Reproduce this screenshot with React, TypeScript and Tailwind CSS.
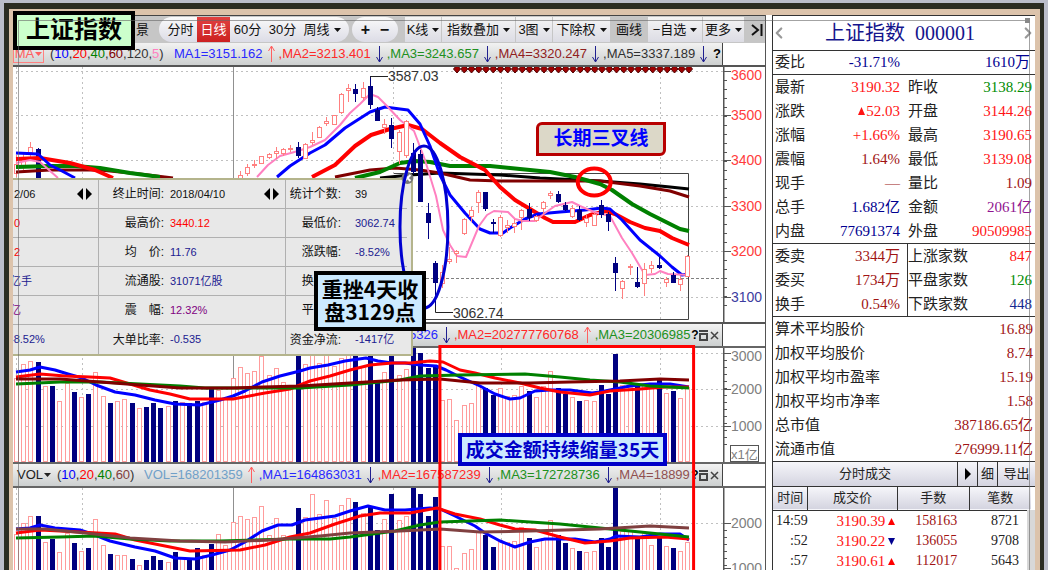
import React from "react";
import { ChevronLeft, ChevronRight } from "lucide-react";

const BLUE = "#0000ff";
const NAVY = "#000080";
const RED = "#ff0000";
const GREEN = "#008000";
const MAROON = "#800000";
const PINK = "#ff80c0";
const UP = "#ff8080";

type Candle = [up: number, high: number, top: number, bottom: number, low: number];

const STEP = 7.22;
const barX = (i: number) => 17 + i * STEP;

// first bars of the window, the ones behind the stats panel are skipped
const leftCandles: Candle[] = [
  [1, 155, 164, 174, 177], [1, 153, 158, 168, 170], [1, 142, 147, 153, 158], [0, 148, 149, 178, 178],
];

// from bar 31 on
const candles: Candle[] = [
  [1, 171, 175, 180, 182], [1, 164, 167, 174, 176], [1, 160, 164, 166, 168], [1, 156, 156, 164, 164],
  [1, 153, 154, 158, 159], [1, 147, 151, 154, 159], [1, 148, 149, 154, 156], [1, 145, 148, 150, 152],
  [0, 142, 147, 156, 158], [1, 143, 144, 159, 159], [1, 132, 140, 143, 145], [1, 126, 127, 138, 138],
  [1, 117, 121, 124, 126], [1, 115, 115, 125, 125], [1, 93, 94, 113, 114], [1, 84, 88, 91, 102],
  [0, 84, 89, 94, 102], [1, 82, 88, 98, 100], [0, 76, 86, 105, 109], [0, 107, 110, 121, 121],
  [1, 119, 124, 128, 134], [0, 118, 125, 139, 148], [1, 130, 132, 152, 164], [1, 120, 121, 156, 158],
  [0, 143, 153, 172, 174], [0, 150, 154, 202, 202], [0, 203, 213, 223, 239], [0, 261, 263, 283, 312],
  [1, 265, 272, 284, 288], [1, 247, 259, 262, 264], [1, 250, 251, 254, 263], [1, 218, 219, 234, 235],
  [1, 207, 210, 217, 222], [1, 190, 192, 203, 213], [0, 192, 192, 209, 211], [0, 219, 222, 224, 233],
  [1, 215, 217, 236, 237], [1, 220, 225, 228, 233], [1, 219, 223, 227, 233], [1, 209, 210, 218, 230],
  [0, 203, 209, 218, 221], [1, 215, 216, 221, 222], [1, 201, 202, 209, 214], [1, 191, 193, 196, 199],
  [0, 191, 194, 202, 203], [0, 202, 205, 210, 211], [1, 205, 208, 217, 218], [0, 206, 210, 220, 221],
  [1, 215, 218, 223, 227], [1, 212, 214, 226, 226], [0, 200, 205, 215, 218], [0, 212, 214, 222, 231],
  [0, 257, 263, 273, 291], [1, 280, 281, 289, 299], [1, 264, 266, 267, 275], [0, 267, 282, 287, 288],
  [1, 263, 269, 284, 296], [1, 261, 265, 269, 273], [0, 257, 265, 268, 269], [1, 277, 279, 283, 287],
  [0, 272, 275, 283, 283], [1, 276, 279, 285, 291], [1, 255, 256, 277, 277],
];

// [up, turnover top, volume top]
const bars: [number, number, number][] = [
  [1, 378, 534], [1, 364, 523], [1, 361, 516], [0, 362, 516], [1, 386, 542], [0, 386, 539], [1, 401, 552],
  [1, 383, 533], [0, 392, 543], [1, 397, 551], [0, 394, 548], [1, 372, 519], [1, 396, 545], [0, 403, 554],
  [1, 401, 555], [1, 399, 555], [0, 403, 559], [1, 408, 565], [0, 407, 560], [0, 403, 556], [0, 408, 560],
  [1, 406, 562], [0, 401, 552], [1, 402, 558], [0, 403, 558], [0, 401, 548], [1, 402, 555], [0, 389, 544],
  [1, 390, 534], [1, 398, 545], [1, 378, 522], [1, 367, 516], [1, 373, 519], [1, 371, 517], [1, 356, 506],
  [1, 375, 535], [1, 368, 518], [1, 382, 535], [1, 385, 537], [0, 350, 508], [1, 364, 517], [1, 352, 494],
  [1, 363, 514], [1, 350, 500], [1, 366, 518], [1, 358, 505], [1, 352, 498], [0, 352, 502], [1, 366, 513],
  [0, 356, 506], [0, 380, 530], [1, 372, 519], [0, 354, 494], [1, 375, 520], [1, 369, 516], [0, 348, 486],
  [0, 353, 494], [0, 368, 516], [0, 365, 497], [1, 400, 546], [1, 399, 546], [1, 420, 568], [1, 405, 553],
  [1, 403, 549], [1, 385, 531], [0, 388, 535], [0, 395, 547], [1, 388, 540], [1, 396, 542], [1, 395, 541],
  [1, 386, 527], [0, 391, 538], [1, 397, 547], [1, 386, 538], [1, 371, 520], [0, 388, 535], [0, 394, 543],
  [1, 397, 548], [0, 401, 551], [1, 400, 552], [1, 401, 551], [0, 385, 538], [0, 394, 547], [0, 354, 488],
  [1, 385, 531], [1, 387, 530], [0, 385, 538], [1, 385, 533], [1, 388, 545], [0, 380, 538], [1, 393, 546],
  [0, 391, 548], [1, 398, 551], [1, 387, 542],
];

interface Line {
  color: string;
  width: number;
  points: string;
}

const priceLines: Line[] = [
  { color: "#000000", width: 3, points: "380,178 410,175 440,173 500,175 540,178 600,181 640,184 670,187 689,189" },
  { color: MAROON, width: 3, points: "16,172 50,170 100,170 140,174 173,178" },
  { color: MAROON, width: 3, points: "335,177 370,170 395,168 420,170 440,173 470,180 500,181 600,181 640,186 670,191 689,197" },
  { color: GREEN, width: 4, points: "16,167 50,166 75,166 100,168 130,173 160,177" },
  { color: GREEN, width: 4, points: "355,178 380,172 400,163 415,161 430,162 450,166 490,166 510,168 550,172 575,177 600,184 612,190 632,204 650,214 668,223 680,229 689,231" },
  { color: RED, width: 4, points: "16,159 40,158 70,163 95,170 113,178" },
  { color: RED, width: 4, points: "312,177 335,165 355,146 371,135 390,129 408,125 422,129 440,143 460,157 485,170 500,187 515,200 530,209 545,218 553,222 575,222 590,215 606,211 615,214 630,222 645,228 660,231 672,238 689,245" },
  { color: BLUE, width: 3, points: "16,153 38,154 50,165 62,171 75,178" },
  { color: BLUE, width: 3, points: "277,177 290,166 310,153 325,145 345,128 370,112 385,107 400,109 408,110 420,124 430,146 440,175 450,195 465,213 480,229 490,233 503,233 510,228 525,219 538,214 560,212 585,210 602,208 610,209 622,220 640,240 660,256 672,267 682,275 689,274" },
  { color: PINK, width: 2, points: "16,163 30,160 40,162 58,178" },
  { color: PINK, width: 2, points: "257,177 268,165 280,156 298,151 310,147 325,140 340,125 350,113 360,104 370,94 378,97 386,105 400,120 414,131 425,160 436,196 443,230 450,245 457,256 466,257 479,226 487,215 494,211 508,212 515,219 523,221 535,221 545,213 555,206 572,202 580,206 594,212 602,214 610,216 622,238 632,253 645,275 655,274 660,271 668,274 689,275" },
];

const turnoverLines: Line[] = [
  { color: BLUE, width: 3, points: "16,372 30,370 40,367 55,370 68,374 82,378 96,385 115,392 135,395 155,400 175,404 200,405 220,400 233,396 245,391 262,382 280,376 300,371 310,368 328,365 345,361 366,358 378,361 392,363 405,363 420,365 436,366 446,370 460,377 480,386 495,394 510,399 520,398 535,391 550,390 570,390 592,393 600,392 615,389 630,386 650,384 670,384 689,387" },
  { color: RED, width: 3, points: "16,377 40,374 65,376 90,377 110,378 130,384 150,390 170,394 190,399 233,399 265,393 290,389 310,381 330,376 350,370 370,365 392,363 410,363 430,361 443,362 460,370 475,373 495,378 520,383 540,388 560,392 590,395 610,391 640,389 665,387 689,387" },
  { color: GREEN, width: 3, points: "16,384 60,382 100,382 140,384 180,386 205,388 300,388 350,385 400,380 420,376 460,375 525,374 560,377 590,380 620,382 650,386 689,388" },
  { color: MAROON, width: 3, points: "16,379 60,379 100,382 140,385 180,388 233,388 300,386 350,383 400,380 440,379 460,381 480,383 530,383 570,382 620,381 660,379 689,380" },
];

const volumeLines: Line[] = [
  { color: BLUE, width: 3, points: "16,529 30,528 40,525 55,528 80,530 95,535 110,541 135,547 155,551 175,558 195,559 212,555 230,550 245,542 262,531 278,525 292,525 305,520 335,516 350,511 368,506 385,510 405,510 430,508 440,509 455,516 475,526 485,533 500,541 515,547 530,542 545,539 575,539 595,542 610,539 616,536 640,537 660,534 680,534 689,540" },
  { color: RED, width: 3, points: "16,533 40,530 80,532 115,534 135,540 160,545 190,551 240,550 265,545 290,537 310,533 335,524 360,516 380,513 410,513 437,508 455,514 480,519 500,525 515,529 535,530 560,537 585,543 610,541 630,538 665,537 689,539" },
  { color: GREEN, width: 3, points: "16,538 60,537 95,536 130,539 170,541 220,541 290,539 330,539 350,537 395,531 420,525 440,522 500,520 560,524 600,528 640,532 670,535 689,537" },
  { color: "#804040", width: 3, points: "16,529 45,529 95,534 130,538 180,541 225,542 270,540 320,536 350,533 400,531 440,529 480,532 530,531 600,529 650,526 689,528" },
];

function Grid({ top, bottom, rows }: { top: number; bottom: number; rows: number[] }) {
  return (
    <g shapeRendering="crispEdges">
      <g stroke="#c0c0c0" strokeDasharray="2 3">
        {rows.map((y) => <path key={y} d={`M16 ${y}.5H723`} />)}
        {[16, 82, 393, 501, 660].map((x) => <path key={x} d={`M${x}.5 ${top}V${bottom}`} />)}
      </g>
      <path d={`M233.5 ${top}V${bottom}`} stroke="#909090" />
    </g>
  );
}

function Lines({ lines }: { lines: Line[] }) {
  return (
    <g fill="none" strokeLinejoin="round">
      {lines.map((l) => (
        <polyline key={l.color + l.points.slice(0, 7)} points={l.points} stroke={l.color} strokeWidth={l.width} />
      ))}
    </g>
  );
}

function Candles({ data, start }: { data: Candle[]; start: number }) {
  return (
    <g>
      {data.map(([up, high, top, bottom, low], i) => {
        const x = Math.round(barX(start + i)) - 1;
        const color = up ? UP : NAVY;
        return (
          <g key={i} stroke={color}>
            <path d={`M${x}.5 ${high}V${top}M${x}.5 ${bottom}V${low}`} />
            <rect x={x - 1.5} y={top + 0.5} width={4} height={Math.max(bottom - top - 1, 1)} fill={up ? "#fff" : NAVY} />
          </g>
        );
      })}
    </g>
  );
}

function Bars({ pick, base }: { pick: 1 | 2; base: number }) {
  return (
    <g>
      {bars.map((b, i) => {
        const x = Math.round(barX(i)) - 3;
        return b[0] ? (
          <rect key={i} x={x + 0.5} y={b[pick] + 0.5} width={4} height={base - b[pick] - 1} fill="#fff" stroke="#ff9c9c" />
        ) : (
          <rect key={i} x={x} y={b[pick]} width={5} height={base - b[pick]} fill={NAVY} />
        );
      })}
    </g>
  );
}

function Axis({ top, height, labels, unit }: { top: number; height: number; labels: [string, number, string][]; unit?: string }) {
  const gap = labels.length > 3 ? 9 : 7;
  const ticks = Array.from({ length: Math.floor((height - 10) / gap) }, (_, i) => labels[0][1] + i * gap);
  return (
    <svg className="w-[42px] shrink-0" height={height} viewBox={`723 ${top} 42 ${height}`}>
      <g stroke="#555">
        <path d={`M723.5 ${top}V${top + height}`} strokeWidth="2" />
        {ticks.map((y) => <path key={y} d={`M723 ${y}.5H727`} />)}
        {labels.map(([t, y]) => <path key={t} d={`M723 ${y}.5H731`} />)}
      </g>
      {/* the first label is pushed down so it stays inside the pane */}
      {labels.map(([t, y, color]) => (
        <text key={t} x="731" y={Math.max(y + 5, top + 13)} fontSize="14" fill={color}>{t}</text>
      ))}
      {unit && (
        <g>
          <rect x="730.5" y="445.5" width="28" height="16" fill="#fff" stroke="#555" />
          <text x="731" y="459" fontSize="13" fill="#808080">{unit}</text>
        </g>
      )}
    </svg>
  );
}

function Arrow({ up }: { up?: boolean }) {
  return (
    <svg className="w-4 h-[18px] shrink-0" viewBox="0 0 16 18" fill="none" stroke={up ? "#ff6060" : "#202090"}>
      {up ? <path d="M8.5 17V1M5.5 6L8.5 1L11.5 6" /> : <path d="M8.5 1V17M5.5 12L8.5 17L11.5 12" />}
    </svg>
  );
}

function Caret() {
  return <svg className="w-[7px] h-1 shrink-0" viewBox="0 0 7 4"><path d="M0 0H7L3.5 4Z" fill="currentColor" /></svg>;
}

function Ma({ text, className, up, last }: { text: string; className: string; up?: boolean; last?: boolean }) {
  return (
    <span className={`flex items-center ${className}`}>
      {text}
      {!last && <Arrow up={up} />}
    </span>
  );
}

function PaneHeader({ children, tools }: { children: React.ReactNode; tools?: boolean }) {
  return (
    <div className="flex h-[22px]">
      <div className="flex-1 min-w-0 flex items-center bg-linear-to-b from-[#f2f2f2] to-[#cdd0d0] border-r border-[#444] text-[13px] whitespace-nowrap">
        <div className="flex-1 min-w-0 flex items-center overflow-hidden">{children}</div>
        {tools ? (
          <div className="flex items-center shrink-0 text-[#444]">
            <button aria-label="说明" className="w-2 text-[12px] font-bold text-black">?</button>
            <button aria-label="最大化" className="w-[11px]">
              <svg className="w-[9px] h-[11px]" viewBox="0 0 9 11" fill="none" stroke="currentColor"><path d="M0 1H9" strokeWidth="2" /><rect x="1" y="4" width="7" height="6" strokeWidth="2" /></svg>
            </button>
            <button aria-label="关闭" className="w-3">
              <svg className="w-[9px] h-[9px]" viewBox="0 0 9 9" stroke="currentColor" strokeWidth="1.5"><path d="M1 1L8 8M8 1L1 8" /></svg>
            </button>
          </div>
        ) : (
          <button aria-label="说明" className="w-[10px] shrink-0 text-[13px] font-bold text-black">?</button>
        )}
      </div>
      <div className="w-[42px] bg-white" />
    </div>
  );
}

const periods = ["60分", "30分"];

const menus = [
  { text: "K线", caret: true, cls: "w-[36px] bg-linear-to-b from-[#f4f4f4] to-[#dcdce4]" },
  { text: "指数叠加", caret: true, cls: "w-[73px] bg-linear-to-b from-[#f4f4f4] to-[#dcdce4]" },
  { text: "3图", caret: true, cls: "w-[36px] bg-linear-to-b from-[#f4f4f4] to-[#dcdce4]" },
  { text: "下除权", caret: true, cls: "w-[57px] bg-linear-to-b from-[#f4f4f4] to-[#dcdce4]" },
  { text: "画线", caret: false, cls: "w-[36px] bg-[#c6c6c6]" },
  { text: "−自选", caret: true, cls: "w-[54px] bg-linear-to-b from-[#f4f4f4] to-[#dcdce4]" },
  { text: "更多", caret: true, cls: "w-[41px] bg-linear-to-b from-[#f4f4f4] to-[#dcdce4]" },
];

function Toolbar() {
  return (
    <div className="flex items-center h-7 pl-[123px] bg-[#c6c6c6] border-t border-[#444] text-[13px] text-[#111] whitespace-nowrap">
      <span className="w-[23px]">景</span>
      <div className="flex items-center h-[25px] pl-[5px] pr-[5px] rounded-full bg-linear-to-b from-[#fafafa] to-[#dcdce6]">
        <button className="w-[33px]">分时</button>
        <button className="w-[33px] h-[25px] bg-linear-to-b from-[#e04040] to-[#cc2020] text-white">日线</button>
        {periods.map((p) => <button key={p} className="w-[35px]">{p}</button>)}
        <button className="flex items-center justify-center gap-1 w-[44px]">周线<Caret /></button>
      </div>
      <div className="flex items-center justify-around h-[25px] w-[46px] mx-[3px] px-1 rounded-full bg-linear-to-b from-[#fafafa] to-[#dcdce6] text-base font-bold">
        <button>+</button>
        <button>−</button>
      </div>
      <div className="flex items-center gap-px ml-1">
        {menus.map((m) => (
          <button key={m.text} className={`flex items-center justify-center gap-1 h-[25px] ${m.cls}`}>
            {m.text}
            {m.caret && <Caret />}
          </button>
        ))}
      </div>
      <button aria-label="收起" className="ml-auto mr-[2px]">
        <svg className="w-3 h-[14px]" viewBox="0 0 12 14" fill="none" stroke="#111" strokeWidth="2"><path d="M1 2L7 7L1 12M10.5 1V13" /></svg>
      </button>
    </div>
  );
}

function Switcher() {
  return (
    <span className="flex gap-[3px] ml-auto">
      <button aria-label="向前"><svg className="w-[6px] h-3" viewBox="0 0 6 12"><path d="M6 0V12L0 6Z" /></svg></button>
      <button aria-label="向后"><svg className="w-[6px] h-3" viewBox="0 0 6 12"><path d="M0 0V12L6 6Z" /></svg></button>
    </span>
  );
}

const stats = [
  { a: "2/06", aCls: "", b: "终止时间", bv: "2018/04/10", bCls: "", c: "统计个数", cv: "39", cCls: "" },
  { a: "0", aCls: "text-[#ff0000]", b: "最高价", bv: "3440.12", bCls: "text-[#ff0000]", c: "最低价", cv: "3062.74", cCls: "text-[#202090]" },
  { a: "2", aCls: "text-[#ff0000]", b: "均　价", bv: "11.76", bCls: "text-[#202090]", c: "涨跌幅", cv: "-8.52%", cCls: "text-[#202090]" },
  { a: "亿手", aCls: "-ml-1 text-[#202090]", b: "流通股", bv: "31071亿股", bCls: "text-[#202090]", c: "换手率", cv: "", cCls: "" },
  { a: "亿", aCls: "-ml-1 text-[#800080]", b: "震　幅", bv: "12.32%", bCls: "text-[#800080]", c: "平衡点", cv: "", cCls: "" },
  { a: "-8.52%", aCls: "-ml-1 text-[#202090]", b: "大单比率", bv: "-0.535", bCls: "text-[#202090]", c: "资金净流", cv: "-1417亿", cCls: "text-[#202090]" },
];

function StatsPanel() {
  return (
    <div className="absolute left-0 top-[163px] w-[400px] bg-[#e8e8e8] border-t-2 border-r-2 border-b-2 border-[#b4b48c] pr-1 text-[11px] text-[#111] whitespace-nowrap overflow-hidden">
      {stats.map((s, i) => (
        <div key={s.b} className={`flex h-[29px] ${i < 5 ? "border-b border-[#b0b0b0]" : ""}`}>
          <div className="flex items-center w-[86px] pl-px pr-[6px] border-r border-[#b0b0b0]">
            <span className={s.aCls}>{s.a}</span>
            {i === 0 && <Switcher />}
          </div>
          <div className="flex items-center w-[187px] pr-[6px] border-r border-[#b0b0b0]">
            <span className="w-[65px] text-right text-[12px]">{s.b}:</span>
            <span className={`ml-[6px] ${s.bCls}`}>{s.bv}</span>
            {i === 0 && <Switcher />}
          </div>
          <div className="flex items-center flex-1">
            <span className="w-[55px] text-right text-[12px]">{s.c}:</span>
            <span className={`ml-[14px] ${s.cCls}`}>{s.cv}</span>
          </div>
        </div>
      ))}
    </div>
  );
}

function ChartPanel() {
  return (
    <main className="relative flex-1 min-w-0 border-r border-[#555] bg-white">
      <Toolbar />
      <PaneHeader>
        <button className="flex items-center gap-px w-[31px] h-[17px] mr-[6px] border border-[#ff8080] justify-center text-[#ff6060]">MA<Caret /></button>
        <span className="w-[124px] text-[#333]">
          (<b className="font-normal text-[#0000ff]">10</b>,<b className="font-normal text-[#ff0000]">20</b>,
          <b className="font-normal text-[#008000]">40</b>,<b className="font-normal text-[#800000]">60</b>,120,
          <b className="font-normal text-[#ff80c0]">5</b>)
        </span>
        <Ma text="MA1=3151.162" className="text-[#2828ff]" up />
        <Ma text=",MA2=3213.401" className="text-[#ff2828]" />
        <Ma text=",MA3=3243.657" className="text-[#209020]" />
        <Ma text=",MA4=3320.247" className="text-[#902020]" />
        <Ma text=",MA5=3337.189" className="text-[#303030]" />
      </PaneHeader>

      {/* ── 日K线 ── */}
      <div className="flex h-[259px] border-t-2 border-b-2 border-[#555]">
        <svg className="flex-1 min-w-0" height={255} viewBox="13 67 710 255" preserveAspectRatio="none">
          <Grid top={67} bottom={322} rows={[71, 115, 160, 206, 251, 297]} />
          <path d="M16 278.5H723" stroke="#808080" strokeDasharray="3 2" />
          <path d="M394 173.5H688.5V319.5H394" fill="none" stroke="#444" />
          <Candles data={leftCandles} start={0} />
          <Lines lines={priceLines} />
          <Candles data={candles} start={31} />
          <g fill="#a00000" stroke="#500000">
            {Array.from({ length: 33 }, (_, i) => {
              const x = 457 + i * 7.25;
              return <path key={i} d={`M${x} 65L${x + 3.5} 69L${x} 73L${x - 3.5} 69Z`} />;
            })}
          </g>
          <path d="M370.5 78V76.5H388M435.5 306V312.5H453" fill="none" stroke="#222" />
          <text x="388" y="81" fontSize="14" fill="#333">3587.03</text>
          <text x="453" y="318" fontSize="14" fill="#333">3062.74</text>
        </svg>
        <Axis
          top={67}
          height={255}
          labels={[["3600", 71, "#ff3c3c"], ["3500", 115, "#ff3c3c"], ["3400", 160, "#ff3c3c"], ["3300", 206, "#ff3c3c"], ["3200", 251, "#ff3c3c"], ["3100", 297, "#3c3ca0"]]}
        />
      </div>

      <PaneHeader tools>
        <span className="w-[396px] shrink-0" />
        <Ma text="5326" className="text-[#2828ff]" />
        <Ma text=",MA2=202777760768" className="text-[#ff2828]" up />
        <Ma text=",MA3=20306985" className="text-[#209020]" last />
      </PaneHeader>

      {/* ── 成交额 ── */}
      <div className="flex h-[118px] border-t-2 border-b-2 border-[#666]">
        <svg className="flex-1 min-w-0" height={114} viewBox="13 348 710 114" preserveAspectRatio="none">
          <Grid top={348} bottom={462} rows={[353, 389, 426]} />
          <Bars pick={1} base={462} />
          <Lines lines={turnoverLines} />
        </svg>
        <Axis top={348} height={114} labels={[["3000", 353, "#808080"], ["2000", 389, "#808080"], ["1000", 426, "#808080"]]} unit="x1亿" />
      </div>

      <PaneHeader tools>
        <button className="flex items-center gap-px w-[40px] shrink-0 ml-1 text-[#222]">VOL<Caret /></button>
        <span className="w-[87px] shrink-0 text-[#333]">
          (<b className="font-normal text-[#0000ff]">10</b>,<b className="font-normal text-[#ff0000]">20</b>,
          <b className="font-normal text-[#008000]">40</b>,<b className="font-normal text-[#804040]">60</b>)
        </span>
        <Ma text="VOL=168201359" className="text-[#70a0c8]" up />
        <Ma text=",MA1=164863031" className="text-[#2828ff]" />
        <Ma text=",MA2=167587239" className="text-[#ff2828]" />
        <Ma text=",MA3=172728736" className="text-[#209020]" />
        <Ma text=",MA4=18899" className="text-[#905050]" last />
      </PaneHeader>

      {/* ── 成交量 ── */}
      <div className="flex h-[84px] border-t-2 border-[#666] overflow-hidden">
        <svg className="flex-1 min-w-0" height={84} viewBox="13 488 710 84" preserveAspectRatio="none">
          <Grid top={488} bottom={572} rows={[523, 570]} />
          <Bars pick={2} base={612} />
          <Lines lines={volumeLines} />
        </svg>
        <Axis top={488} height={84} labels={[["2000", 523, "#808080"], ["1000", 568, "#808080"]]} />
      </div>

      <StatsPanel />

      {/* ── Annotations ── */}
      <svg className="absolute inset-0 w-full h-[555px] pointer-events-none" viewBox="13 15 753 555" preserveAspectRatio="none" fill="none">
        <circle cx="408" cy="178" r="6" fill="#777" />
        <path d="M405 175L411 181M411 175L405 181" stroke="#fff" strokeWidth="2" />
        <ellipse cx="424.5" cy="227" rx="24" ry="81" stroke="#0000d0" strokeWidth="3" />
        <ellipse cx="595" cy="182" rx="16.5" ry="13.5" stroke={RED} strokeWidth="4" />
        <path d="M440.5 572V346.5H694.5V572" stroke={RED} strokeWidth="3" />
      </svg>
      <h1 className="absolute left-0 -top-1 w-[122px] h-[39px] border-4 border-black bg-[#ccffcc] text-[24px] leading-[30px] font-bold text-black text-center whitespace-nowrap">上证指数</h1>
      <div className="absolute left-[523px] top-[107px] w-[130px] h-[34px] border-3 border-[#b80000] rounded-tl-md rounded-br-md bg-[#dcd8c8] text-[19px] leading-[28px] font-bold text-[#0000ff] text-center">长期三叉线</div>
      <div className="absolute left-[301px] top-[256px] w-[112px] h-[60px] border-4 border-black bg-[#cceaff] text-[21px] leading-[23px] pt-[2px] font-bold text-black text-center [font-family:'Noto_Sans_CJK_SC',sans-serif] whitespace-nowrap">
        重挫4天收<br />盘3129点
      </div>
      <div className="absolute left-[445px] top-[418px] w-[209px] h-[33px] border-4 border-[#0000c8] bg-[#cceaff] text-[19px] leading-[24px] font-bold text-[#0000c8] text-center [font-family:'Noto_Sans_CJK_SC',sans-serif] whitespace-nowrap">成交金额持续缩量35天</div>
    </main>
  );
}

const quotes = [
  ["最新", "3190.32", "text-[#ff1414]", "昨收", "3138.29", "text-[#008c00]"],
  ["涨跌", "▲52.03", "text-[#ff1414]", "开盘", "3144.26", "text-[#ff1414]"],
  ["涨幅", "+1.66%", "text-[#ff1414]", "最高", "3190.65", "text-[#ff1414]"],
  ["震幅", "1.64%", "text-[#a01414]", "最低", "3139.08", "text-[#ff1414]"],
  ["现手", "—", "text-[#a01414]", "量比", "1.09", "text-[#a01414]"],
  ["总手", "1.682亿", "text-[#000090]", "金额", "2061亿", "text-[#901490]"],
  ["内盘", "77691374", "text-[#000090]", "外盘", "90509985", "text-[#ff1414]"],
];

const breadth = [
  ["委卖", "3344万", "text-[#a01414]", "上涨家数", "847", "text-[#ff1414]"],
  ["委买", "1734万", "text-[#a01414]", "平盘家数", "126", "text-[#008c00]"],
  ["换手", "0.54%", "text-[#a01414]", "下跌家数", "448", "text-[#142890]"],
];

const averages = [
  ["算术平均股价", "16.89"],
  ["加权平均股价", "8.74"],
  ["加权平均市盈率", "15.19"],
  ["加权平均市净率", "1.58"],
  ["总市值", "387186.65亿"],
  ["流通市值", "276999.11亿"],
];

const ticks = [
  { time: "14:59", price: "3190.39", up: true, lots: "158163", deals: "8721" },
  { time: ":52", price: "3190.22", up: false, lots: "136055", deals: "9708" },
  { time: ":57", price: "3190.61", up: true, lots: "112017", deals: "5643" },
];

function QuoteRows({ rows, divided }: { rows: string[][]; divided?: boolean }) {
  return (
    <dl className="border-b border-[#333]">
      {rows.map((r) => (
        <div key={r[0]} className="flex items-center h-6 pl-[2px] pr-[3px]">
          <dt>{r[0]}</dt>
          <dd className={`w-[95px] text-right ${r[2]}`}>
            {r[1].startsWith("▲") ? (
              <>
                <svg className="inline w-[7px] h-2 mr-px mb-[2px]" viewBox="0 0 7 8"><path d="M3.5 0L7 8H0Z" fill="currentColor" /></svg>
                {r[1].slice(1)}
              </>
            ) : r[1]}
          </dd>
          <dt className={`ml-[7px] h-6 leading-6 ${divided ? "border-l border-[#333]" : "pl-px"}`}>{r[3]}</dt>
          <dd className={`flex-1 text-right ${r[5]}`}>{r[4]}</dd>
        </div>
      ))}
    </dl>
  );
}

function QuotePanel() {
  const head = "bg-linear-to-b from-[#f6f6fa] to-[#d4d4e0]";
  return (
    <aside className="w-[263px] shrink-0 ml-[6px] bg-white border-l border-t border-[#333] text-[15px] text-[#222] whitespace-nowrap [font-family:'Liberation_Serif','Noto_Sans_CJK_SC',sans-serif]">
      <div className="flex items-center justify-between h-[35px] border-b border-[#333] text-[#14148c]">
        <button aria-label="上一个" className="w-[14px]"><ChevronLeft size={18} strokeWidth={3} className="-ml-[3px] text-[#999]" /></button>
        <h2 className="pr-2 text-[20px] leading-6">上证指数&ensp;000001</h2>
        <button aria-label="下一个" className="w-[14px]"><ChevronRight size={18} strokeWidth={3} className="-ml-[2px] text-[#999]" /></button>
      </div>
      <dl className="flex items-center h-6 pl-[2px] pr-[5px] border-b border-[#333] text-[#000090]">
        <dt className="text-[#222]">委比</dt>
        <dd className="w-[95px] text-right">-31.71%</dd>
        <dd className="flex-1 text-right">1610万</dd>
      </dl>
      <QuoteRows rows={quotes} />
      <QuoteRows rows={breadth} divided />
      <dl className="border-b border-[#333]">
        {averages.map(([k, v]) => (
          <div key={k} className="flex items-center justify-between h-6 px-[2px]">
            <dt>{k}</dt>
            <dd className="text-[#a01414]">{v}</dd>
          </div>
        ))}
      </dl>
      <div className={`flex items-center h-[25px] border-b border-[#333] text-[13px] ${head}`}>
        <h3 className="flex-1 text-center">分时成交</h3>
        <button aria-label="展开" className="flex items-center justify-center w-5 h-6 border-l border-[#333]">
          <svg className="w-[6px] h-3" viewBox="0 0 6 12"><path d="M0 0V12L6 6Z" /></svg>
        </button>
        <button className="w-5 h-6 border-l border-[#333]">细</button>
        <button className="w-[38px] h-6 border-l border-[#333]">导出</button>
      </div>
      <div className="flex">
        <table className="flex-1 table-fixed border-collapse text-[14px] leading-5">
          <thead>
            <tr className={`h-[23px] border-b border-[#333] text-[13px] ${head}`}>
              <th className="w-[35px] font-normal border-r border-[#333]">时间</th>
              <th className="w-[91px] font-normal border-r border-[#333]">成交价</th>
              <th className="w-[73px] font-normal border-r border-[#333]">手数</th>
              <th className="w-[63px] font-normal">笔数</th>
            </tr>
          </thead>
          <tbody>
            {ticks.map((t) => (
              <tr key={t.time} className="h-5">
                <td className="text-right">{t.time}</td>
                <td className="text-right text-[15px] text-[#ff1414]">
                  {t.price}
                  <svg className="inline w-[7px] h-[7px] ml-[3px] mr-[2px] mb-[2px]" viewBox="0 0 8 8">
                    {t.up ? <path d="M4 0L8 8H0Z" fill="#ff0000" /> : <path d="M0 0H8L4 8Z" fill="#000090" />}
                  </svg>
                </td>
                <td className="pr-3 text-right text-[#a01414]">{t.lots}</td>
                <td className="pr-2 text-right border-r-8 border-[#d8d8d8]">{t.deals}</td>
              </tr>
            ))}
          </tbody>
        </table>
      </div>
    </aside>
  );
}

export default function App() {
  return (
    <div className="min-h-screen px-1 pt-[3px] bg-[#bbbdca] overflow-hidden [font-family:'Liberation_Sans','Noto_Sans_CJK_SC',sans-serif]">
      <div className="border-t-6 border-l-5 border-r-4 border-[#2b2c22]">
        <div className="relative flex border-t-6 border-l-4 border-r-5 border-[#dcc3ab] bg-white">
          <ChartPanel />
          <QuotePanel />
          <div className="absolute left-[5px] top-[5px] right-[5px] bottom-0 border border-b-0 border-[#666]/60 pointer-events-none" />
          <span className="absolute right-[5px] top-[3px] w-[5px] h-[5px] bg-[#888]" />
        </div>
      </div>
    </div>
  );
}
